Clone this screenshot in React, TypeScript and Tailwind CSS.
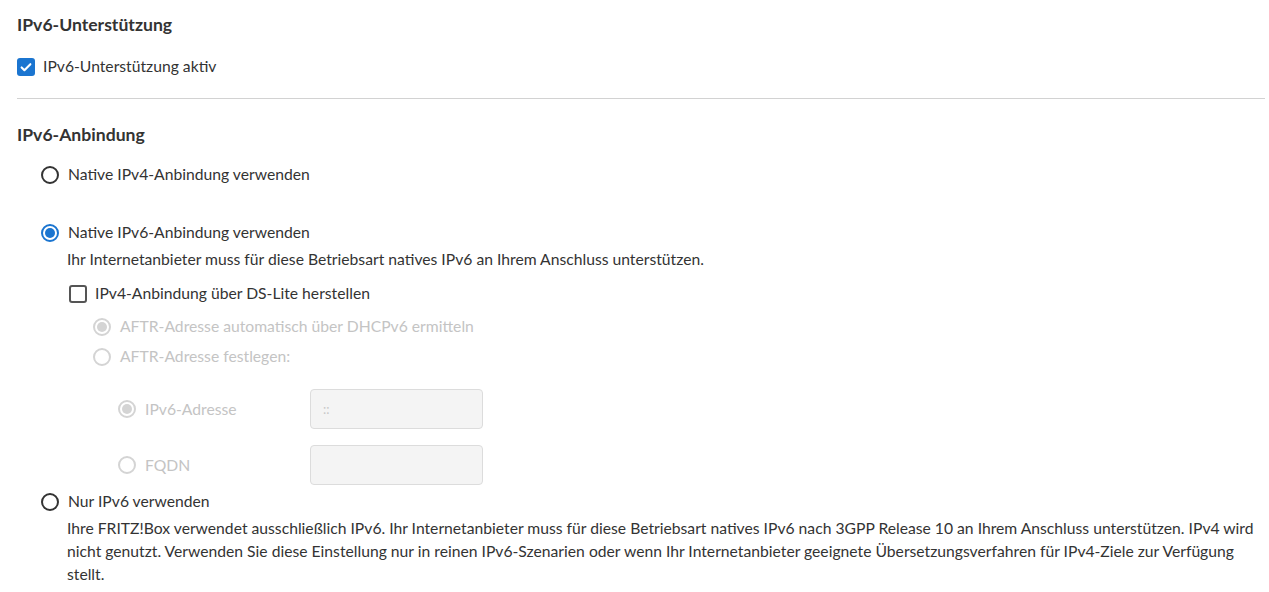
import React from 'react';

function Radio({ checked = false, disabled = false }: { checked?: boolean; disabled?: boolean }) {
    const ring = disabled ? 'border-[#d4d4d4]' : checked ? 'border-[#1b75d0]' : 'border-[#333333]';
    const dot = disabled ? 'bg-[#d4d4d4]' : 'bg-[#1b75d0]';
    return (
        <span className={`shrink-0 size-[18px] rounded-full border-2 ${ring} flex items-center justify-center`}>
            {checked && <span className={`size-[10px] rounded-full ${dot}`} />}
        </span>
    );
}

function Checkbox({ checked = false }: { checked?: boolean }) {
    return checked ? (
        <span className="shrink-0 size-[18px] rounded-[3px] bg-[#1b75d0] flex items-center justify-center">
            <svg viewBox="0 0 16 16" className="w-[14px] h-[14px]" fill="none" stroke="white" strokeWidth="2.4" strokeLinecap="round" strokeLinejoin="round">
                <path d="M3 8.5l3.2 3.2L13 4.8" />
            </svg>
        </span>
    ) : (
        <span className="shrink-0 size-[18px] rounded-[3px] border-2 border-[#555555] bg-white" />
    );
}

function Option({ label, checked, disabled, className = '' }: { label: string; checked?: boolean; disabled?: boolean; className?: string }) {
    return (
        <label className={`flex items-center gap-[9px] ${className}`}>
            <Radio checked={checked} disabled={disabled} />
            <span className={disabled ? 'text-[#c4c4c4]' : 'text-[#333333]'}>{label}</span>
        </label>
    );
}

export default function App() {
    return (
        <div className="min-h-screen bg-white pl-[17px] pr-[4px] pt-[13px] text-[15.7px] leading-[23px] text-[#333333]" style={{ fontFamily: 'Lato, "Liberation Sans", sans-serif' }}>
            {/* IPv6-Unterstützung */}
            <h2 className="text-[17.6px] font-bold leading-[24px] text-[#333333]">IPv6-Unterstützung</h2>
            <label className="mt-[18px] flex items-center gap-[8px]">
                <Checkbox checked />
                <span>IPv6-Unterstützung aktiv</span>
            </label>
            <hr className="mt-[20px] border-t border-[#d2d2d2]" />

            {/* IPv6-Anbindung */}
            <h2 className="mt-[24px] text-[17.6px] font-bold leading-[24px]">IPv6-Anbindung</h2>

            <div className="pl-[24px] mt-[16px]">
                <Option label="Native IPv4-Anbindung verwenden" />

                <Option label="Native IPv6-Anbindung verwenden" checked className="mt-[35px]" />
                <div className="pl-[26px]">
                    <p className="mt-[4px]">Ihr Internetanbieter muss für diese Betriebsart natives IPv6 an Ihrem Anschluss unterstützen.</p>
                    <label className="mt-[11px] flex items-center gap-[8px] ml-[2px]">
                        <Checkbox />
                        <span>IPv4-Anbindung über DS-Lite herstellen</span>
                    </label>
                    <div className="pl-[26px]">
                        <Option label="AFTR-Adresse automatisch über DHCPv6 ermitteln" checked disabled className="mt-[10px]" />
                        <Option label="AFTR-Adresse festlegen:" disabled className="mt-[7px]" />
                        <div className="pl-[25px] mt-[21px] flex flex-col gap-[16px]">
                            <div className="flex items-center">
                                <Option label="IPv6-Adresse" checked disabled className="w-[192px]" />
                                <div className="w-[173px] h-[40px] rounded-[4px] border border-[#dcdcdc] bg-[#f4f4f4] flex items-center px-[12px] text-[13px] text-[#c8c8c8]">::</div>
                            </div>
                            <div className="flex items-center">
                                <Option label="FQDN" disabled className="w-[192px]" />
                                <div className="w-[173px] h-[40px] rounded-[4px] border border-[#dcdcdc] bg-[#f4f4f4]" />
                            </div>
                        </div>
                    </div>
                </div>

                <Option label="Nur IPv6 verwenden" className="mt-[5px]" />
                <p className="pl-[26px] mt-[4px] pr-[2px]">
                    Ihre FRITZ!Box verwendet ausschließlich IPv6. Ihr Internetanbieter muss für diese Betriebsart natives IPv6 nach 3GPP Release 10 an Ihrem Anschluss unterstützen. IPv4 wird nicht genutzt. Verwenden Sie diese Einstellung nur in reinen IPv6-Szenarien oder wenn Ihr Internetanbieter geeignete Übersetzungsverfahren für IPv4-Ziele zur Verfügung stellt.
                </p>
            </div>
        </div>
    );
}
